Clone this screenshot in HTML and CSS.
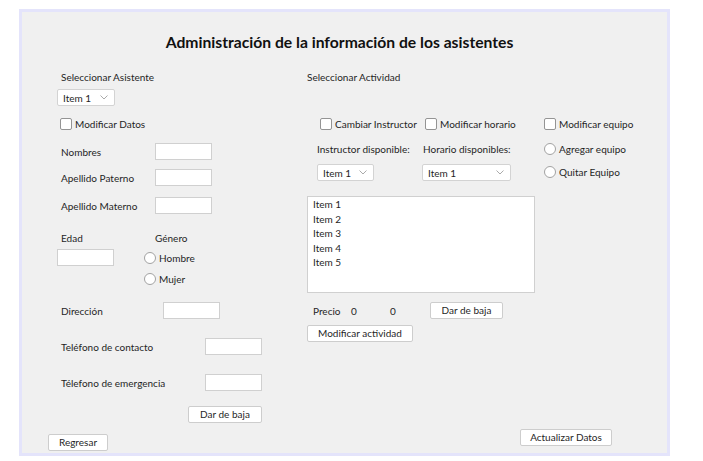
FILE: index.html
```html
<!DOCTYPE html>
<html lang="es">
<head>
<meta charset="utf-8">
<title>Administración de asistentes</title>
<link rel="stylesheet" href="styles.css">
</head>
<body>
<div class="panel">
  <h1 class="title">Administración de la información de los asistentes</h1>
  <div class="cols">
    <div class="left">
      <div class="lbl sel-lbl">Seleccionar Asistente</div>
      <div class="combo combo-a"><span>Item 1</span><svg class="chev" width="8" height="5" viewBox="0 0 8 5"><polyline points="0.5,0.5 4,4 7.5,0.5" fill="none" stroke="#a0a0a0" stroke-width="0.9"/></svg></div>
      <div class="check mod-datos"><span class="box"></span><span>Modificar Datos</span></div>

      <div class="frow r-nom"><span class="flabel w94">Nombres</span><span class="field"></span></div>
      <div class="frow r-pat"><span class="flabel w94">Apellido Paterno</span><span class="field"></span></div>
      <div class="frow r-mat"><span class="flabel w94">Apellido Materno</span><span class="field"></span></div>

      <div class="frow r-hdr"><span class="flabel w94">Edad</span><span class="flabel">Género</span></div>
      <div class="frow r-edad"><span class="field edad-field"></span><span class="radio hombre"><span class="circ"></span><span>Hombre</span></span></div>
      <div class="frow r-mujer"><span class="radio"><span class="circ"></span><span>Mujer</span></span></div>

      <div class="frow r-dir"><span class="flabel w102">Dirección</span><span class="field"></span></div>
      <div class="frow r-tel"><span class="flabel w144">Teléfono de contacto</span><span class="field"></span></div>
      <div class="frow r-eme"><span class="flabel w144">Télefono de emergencia</span><span class="field"></span></div>

      <button class="btn baja-l">Dar de baja</button>
      <button class="btn regresar">Regresar</button>
    </div>

    <div class="right">
      <div class="lbl">Seleccionar Actividad</div>
      <div class="opts">
        <div class="check c1"><span class="box"></span><span>Cambiar Instructor</span></div>
        <div class="check c2"><span class="box"></span><span>Modificar horario</span></div>
        <div class="check c3"><span class="box"></span><span>Modificar equipo</span></div>

        <div class="lbl c1l">Instructor disponible:</div>
        <div class="lbl c2l">Horario disponibles:</div>
        <div class="radio c3"><span class="circ"></span><span>Agregar equipo</span></div>

        <div class="combo combo-b"><span>Item 1</span><svg class="chev" width="8" height="5" viewBox="0 0 8 5"><polyline points="0.5,0.5 4,4 7.5,0.5" fill="none" stroke="#a0a0a0" stroke-width="0.9"/></svg></div>
        <div class="combo combo-c"><span>Item 1</span><svg class="chev" width="8" height="5" viewBox="0 0 8 5"><polyline points="0.5,0.5 4,4 7.5,0.5" fill="none" stroke="#a0a0a0" stroke-width="0.9"/></svg></div>
        <div class="radio c3"><span class="circ"></span><span>Quitar Equipo</span></div>
      </div>

      <ul class="list">
        <li>Item 1</li>
        <li>Item 2</li>
        <li>Item 3</li>
        <li>Item 4</li>
        <li>Item 5</li>
      </ul>

      <div class="precio">
        <span class="p-lbl">Precio</span>
        <span class="p-v1">0</span>
        <span class="p-v2">0</span>
        <button class="btn baja-r">Dar de baja</button>
      </div>
      <button class="btn mod-act">Modificar actividad</button>
      <button class="btn actualizar">Actualizar Datos</button>
    </div>
  </div>
</div>
</body>
</html>
```

FILE: styles.css
```css
* { box-sizing: border-box; }
html, body { margin: 0; padding: 0; background: #ffffff; }
body {
  font-family: Lato, "Open Sans", sans-serif;
  font-size: 10px;
  color: #1f1f1f;
  width: 703px;
  height: 461px;
  overflow: hidden;
}
.panel {
  margin: 9px 0 0 19px;
  width: 651px;
  height: 447px;
  background: #f0f0f0;
  border: 3px solid #e4e4fb;
}
.title {
  margin: 20px 0 0 0;
  height: 20px;
  line-height: 20px;
  font-size: 15.7px;
  font-weight: 700;
  text-align: center;
  color: #111;
  padding-right: 10px;
}
.cols { display: flex; margin-top: 18px; }
.left { width: 285px; display: flex; flex-direction: column; align-items: flex-start; }
.right { flex: 1; display: flex; flex-direction: column; align-items: flex-start; }

.lbl { height: 14px; line-height: 14px; white-space: nowrap; }
.sel-lbl { margin-left: 39px; }

.combo {
  display: flex; align-items: center; justify-content: space-between;
  height: 17px; background: #fff; border: 1px solid #d3d3d3; border-radius: 2px;
  padding: 0 6px 0 5px;
}
.combo-a { margin: 5px 0 0 35px; width: 58px; }
.chev { display: block; }

.check, .radio { display: flex; align-items: center; height: 14px; white-space: nowrap; }
.box {
  width: 12px; height: 12px; background: #fff; border: 1px solid #949494; border-radius: 2px;
  margin-right: 3px; flex: none;
}
.circ {
  width: 12px; height: 12px; background: #fff; border: 1px solid #a2a2a2; border-radius: 50%;
  margin-right: 3px; flex: none;
}
.mod-datos { margin: 11px 0 0 38px; }

.frow { display: flex; align-items: center; height: 17px; margin-left: 39px; }
.flabel { white-space: nowrap; }
.w94 { width: 94px; }
.w102 { width: 102px; }
.w144 { width: 144px; }
.field { width: 57px; height: 17px; background: #fff; border: 1px solid #d0d0d0; }
.r-nom { margin-top: 12px; }
.r-pat { margin-top: 9px; }
.r-mat { margin-top: 11px; }
.r-hdr { margin-top: 17px; height: 14px; }
.r-edad { margin-top: 4px; margin-left: 35px; }
.hombre { margin-left: 30px; }
.r-mujer { margin-top: 5px; margin-left: 122px; height: 16px; }
.r-dir { margin-top: 15px; }
.r-tel { margin-top: 19px; }
.r-eme { margin-top: 19px; }

.btn {
  font: inherit; color: #1f1f1f;
  height: 17px; padding: 0; background: #fff;
  border: 1px solid #cdcdcd; border-radius: 2px;
  text-align: center; line-height: 15px;
}
.baja-l { margin: 15px 0 0 166px; width: 74px; }
.regresar { margin: 11px 0 0 26px; width: 60px; }

.opts {
  display: grid;
  grid-template-columns: 106px 121px auto;
  margin: 33px 0 0 10px;
}
.opts .check.c1 { padding-left: 3px; }
.opts .check.c2 { padding-left: 2px; }
.c1l, .c2l { margin-top: 11px; }
.opts .radio.c3 { margin-top: 11px; }
.combo-b { width: 57px; margin-top: 8px; }
.combo-c { width: 89px; margin-top: 8px; margin-left: -1px; }
.opts .combo-c + .radio.c3 { margin-top: 9px; }

.list {
  list-style: none; margin: 15px 0 0 0; padding: 0 0 0 5px;
  width: 228px; height: 97px; background: #fff; border: 1px solid #d0d0d0;
}
.list li { height: 14.5px; line-height: 14.5px; }

.precio { display: flex; align-items: center; height: 17px; margin-top: 9px; }
.p-lbl { margin-left: 6px; width: 38px; }
.p-v1 { width: 39px; }
.p-v2 { width: 40px; }
.baja-r { width: 73px; }
.mod-act { margin-top: 6px; width: 106px; }
.actualizar { margin: 87px 0 0 213px; width: 92px; }
```
